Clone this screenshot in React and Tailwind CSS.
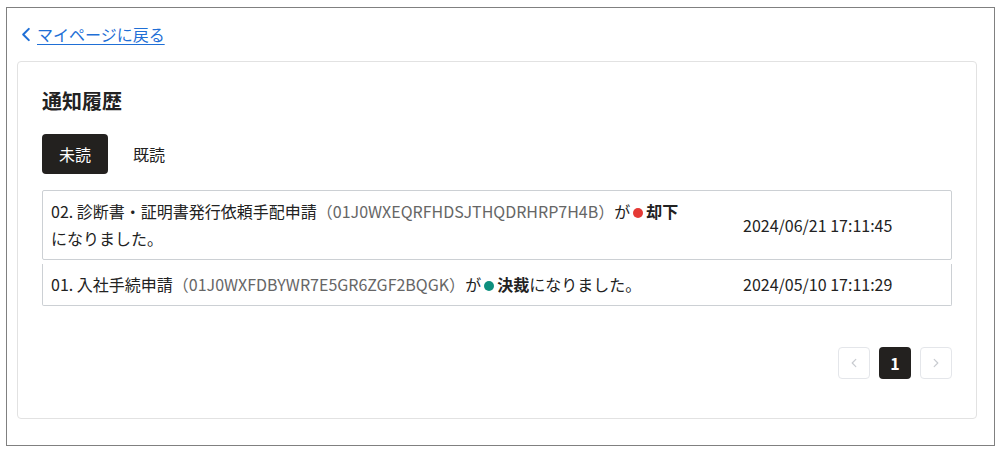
const font = { fontFamily: '"Noto Sans CJK JP", "Noto Sans", sans-serif' }

const rows = [
  {
    no: '02.',
    title: '診断書・証明書発行依頼手配申請',
    id: '01J0WXEQRFHDSJTHQDRHRP7H4B',
    status: '却下',
    dot: 'bg-[#e53935]',
    date: '2024/06/21 17:11:45',
  },
  {
    no: '01.',
    title: '入社手続申請',
    id: '01J0WXFDBYWR7E5GR6ZGF2BQGK',
    status: '決裁',
    dot: 'bg-[#0e8f7e]',
    date: '2024/05/10 17:11:29',
  },
]

function Chevron({ dir = 'left', className, width = 2 }) {
  return (
    <svg viewBox="0 0 10 16" className={className} fill="none" stroke="currentColor" strokeWidth={width} strokeLinecap="round" strokeLinejoin="round">
      {dir === 'left' ? <polyline points="8,2 2,8 8,14" /> : <polyline points="2,2 8,8 2,14" />}
    </svg>
  )
}

export default function App() {
  return (
    <div className="bg-white pl-[6px] pt-[7px] w-[1007px] h-[449px] text-[#222]" style={font}>
      <div className="w-[989px] h-[439px] border border-[#808080] px-[10px] pt-[14px]">
        <a href="#" className="ml-[4px] flex items-center gap-[6px] h-6 text-[16px] leading-6 text-[#1f6fd6]">
          <Chevron className="w-[10px] h-[15px]" width={2.2} />
          <span className="underline underline-offset-[3px]">マイページに戻る</span>
        </a>

        <div className="mt-[15px] w-[960px] h-[358px] rounded-[4px] border border-[#e2e2e2] px-6 pt-6">
          <h1 className="text-[20px] leading-[30px] font-bold">通知履歴</h1>

          <div className="mt-[18px] flex gap-2">
            <button className="h-10 w-[66px] rounded-[4px] bg-[#23211f] text-white text-[16px]">未読</button>
            <button className="h-10 w-[66px] rounded-[4px] text-[16px] text-[#222]">既読</button>
          </div>

          <div className="mt-4">
            {rows.map((r, i) => (
              <div
                key={r.no}
                className={
                  i === 0
                    ? 'flex items-center border border-[#ccd0d4] rounded-[2px] px-2 py-[7px]'
                    : 'mt-[4px] flex items-center border-x border-b border-[#ccd0d4] rounded-b-[2px] px-2 py-[7px]'
                }
              >
                <p className="w-[638px] text-[16px] leading-[27px]">
                  {r.no} {r.title}
                  <span className="text-[#666]">（{r.id}）</span>が
                  <span className={`inline-block w-[10px] h-[10px] rounded-full ${r.dot} mx-[3px] align-[0px]`} />
                  <span className="font-bold">{r.status}</span>になりました。
                </p>
                <span className="ml-[54px] text-[16px] leading-[27px]">{r.date}</span>
              </div>
            ))}
          </div>

          <div className="mt-[41px] flex justify-end gap-[9px]">
            <button className="w-8 h-8 rounded-[4px] border border-[#e4e6ea] flex items-center justify-center text-[#c8cbd0]">
              <Chevron className="w-[6px] h-[10px]" />
            </button>
            <button className="w-8 h-8 rounded-[4px] bg-[#23211f] text-white text-[16px] font-semibold">1</button>
            <button className="w-8 h-8 rounded-[4px] border border-[#e4e6ea] flex items-center justify-center text-[#c8cbd0]">
              <Chevron dir="right" className="w-[6px] h-[10px]" />
            </button>
          </div>
        </div>
      </div>
    </div>
  )
}
